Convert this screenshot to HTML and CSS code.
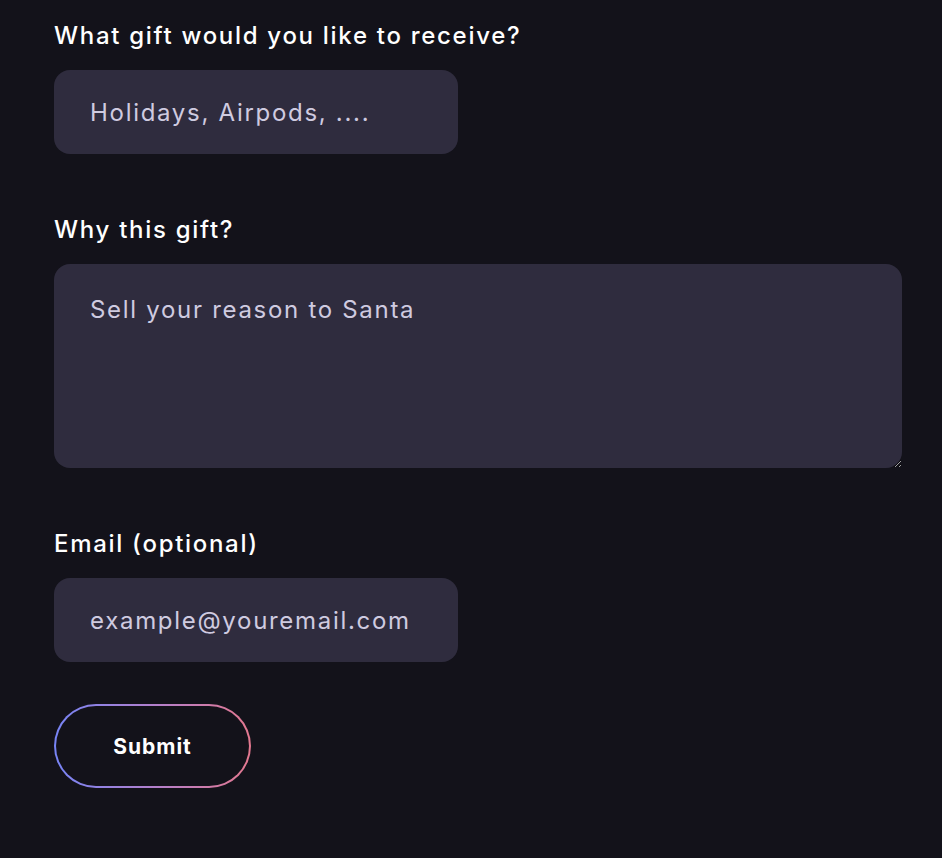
FILE: index.html
```html
<!DOCTYPE html>
<html lang="en">
<head>
<meta charset="utf-8">
<title>Gift form</title>
<link rel="stylesheet" href="styles.css">
</head>
<body>
<form class="form">
  <div class="field">
    <label class="label" for="gift">What gift would you like to receive?</label>
    <input class="input" id="gift" type="text" placeholder="Holidays, Airpods, ....">
  </div>
  <div class="field">
    <label class="label" for="why">Why this gift?</label>
    <textarea class="input textarea" id="why" placeholder="Sell your reason to Santa"></textarea>
  </div>
  <div class="field">
    <label class="label" for="email">Email (optional)</label>
    <input class="input" id="email" type="email" placeholder="example@youremail.com">
  </div>
  <button class="submit" type="button">Submit</button>
</form>
</body>
</html>
```

FILE: styles.css
```css
html, body {
  margin: 0;
  padding: 0;
  background: #13121a;
}
body {
  font-family: Inter, "Noto Sans", sans-serif;
  color: #ffffff;
}
.form {
  display: flex;
  flex-direction: column;
  gap: 58px;
  padding: 18px 40px 70px 54px;
  width: 848px;
}
.field {
  display: flex;
  flex-direction: column;
  gap: 16px;
}
.label {
  font-size: 24px;
  line-height: 36px;
  font-weight: 500;
  letter-spacing: 1.7px;
  color: #ffffff;
}
.input {
  box-sizing: border-box;
  width: 404px;
  height: 84px;
  padding: 30px 36px;
  border: none;
  border-radius: 16px;
  background: #2f2c3e;
  color: #ffffff;
  font-family: inherit;
  font-size: 24px;
  line-height: 24px;
  letter-spacing: 1.7px;
  outline: none;
}
.input::placeholder {
  color: #cfcbe0;
  opacity: 1;
}
.textarea {
  width: 848px;
  height: 204px;
  resize: vertical;
  line-height: 30px;
  padding-top: 31px;
}
.submit {
  margin-top: -16px;
  box-sizing: border-box;
  width: 197px;
  height: 84px;
  border: 2px solid transparent;
  border-radius: 42px;
  background: linear-gradient(#13121a, #13121a) padding-box,
              linear-gradient(90deg, #7784f6, #b77fc8 55%, #e4788f) border-box;
  color: #ffffff;
  font-family: inherit;
  font-size: 21px;
  font-weight: 700;
  letter-spacing: 1px;
  cursor: pointer;
}
```
